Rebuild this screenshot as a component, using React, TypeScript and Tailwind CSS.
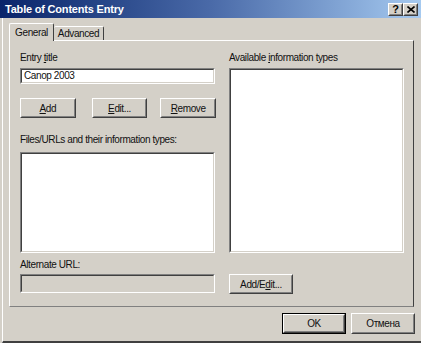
import type { ReactNode } from 'react'

const font = { fontFamily: '"Liberation Sans", Arial, sans-serif' }

// classic raised bevel (buttons, title bar boxes)
const Raised = ({ className = '', children }: { className?: string; children?: ReactNode }) => (
  <div className={`border border-t-white border-l-white border-r-[#404040] border-b-[#404040] ${className}`}>
    <div className="flex h-full w-full items-center justify-center border border-t-[#d4d0c8] border-l-[#d4d0c8] border-r-[#808080] border-b-[#808080]">
      {children}
    </div>
  </div>
)

// classic sunken bevel (inputs, list boxes)
const Sunken = ({ className = '', bg = 'bg-white', children }: { className?: string; bg?: string; children?: ReactNode }) => (
  <div className={`border border-t-[#808080] border-l-[#808080] border-r-white border-b-white ${className}`}>
    <div className={`h-full w-full border border-t-[#404040] border-l-[#404040] border-r-[#d4d0c8] border-b-[#d4d0c8] ${bg}`}>
      {children}
    </div>
  </div>
)

const U = ({ children }: { children: ReactNode }) => <span className="underline underline-offset-1">{children}</span>

const Label = ({ children }: { children: ReactNode }) => (
  <div className="h-[13px] text-[10px] leading-[13px] tracking-[-0.4px] text-[#111]">{children}</div>
)

const txt = 'text-[10px] tracking-[-0.4px] text-[#111]'

export default function App() {
  return (
    <div className="flex h-[343px] w-[421px] flex-col overflow-hidden bg-[#d4d0c8]" style={font}>
      {/* Title bar */}
      <div className="flex h-[18px] shrink-0 items-center bg-gradient-to-r from-[#0a246a] via-[#4a6aa8] to-[#a6caf0] pl-[5px] pr-[3px]">
        <span className="flex-1 text-[11px] font-bold leading-none tracking-[-0.2px] text-white">Table of Contents Entry</span>
        <Raised className="h-[13px] w-[15px] bg-[#d4d0c8]">
          <span className="text-[11px] font-bold leading-none text-black">?</span>
        </Raised>
        <Raised className="h-[13px] w-[15px] bg-[#d4d0c8]">
          <svg width="8" height="7" viewBox="0 0 8 7">
            <path d="M0.5 0.5 L7.5 6.5 M7.5 0.5 L0.5 6.5" stroke="black" strokeWidth="1.6" />
          </svg>
        </Raised>
      </div>

      {/* Body */}
      <div className="ml-[2px] flex flex-1 flex-col border-l border-l-white border-b-2 border-b-[#404040] pl-[6px] pr-[6px]">
        {/* Tabs */}
        <div className="mt-[5px] flex h-[17px] items-end">
          <div className={`relative z-10 -mb-px flex h-[18px] w-[45px] items-center justify-center rounded-t-[2px] border-t border-l border-r border-t-white border-l-white border-r-[#404040] bg-[#d4d0c8] ${txt}`}>
            General
          </div>
          <div className={`flex h-[14px] w-[50px] items-center justify-center rounded-t-[2px] border-t border-r border-t-white border-r-[#404040] ${txt}`}>
            Advanced
          </div>
        </div>

        {/* Tab panel */}
        <div className="flex h-[267px] w-[405px] border border-t-white border-l-white border-r-[#404040] border-b-[#808080] pl-[10px] pt-[10px]">
          <div className="flex w-[196px] flex-col">
            <Label>
              Entry <U>t</U>itle
            </Label>
            <Sunken className="mt-[4px] h-[16px] w-[195px]">
              <div className={`pl-[2px] leading-[12px] ${txt}`}>Canop 2003</div>
            </Sunken>
            <div className="mt-[14px] flex h-[20px]">
              <Raised className="h-[20px] w-[56px]">
                <span className={txt}><U>A</U>dd</span>
              </Raised>
              <Raised className="ml-[16px] h-[20px] w-[56px]">
                <span className={txt}><U>E</U>dit...</span>
              </Raised>
              <Raised className="ml-[13px] h-[20px] w-[56px]">
                <span className={txt}><U>R</U>emove</span>
              </Raised>
            </div>
            <div className="mt-[15px]">
              <Label>Files/URLs and their information types:</Label>
            </div>
            <Sunken className="mt-[6px] h-[101px] w-[195px]" />
            <div className="mt-[5px]">
              <Label>Alternate URL:</Label>
            </div>
            <Sunken className="mt-[3px] h-[19px] w-[195px]" bg="bg-[#d4d0c8]" />
          </div>

          <div className="ml-[13px] flex w-[175px] flex-col">
            <Label>
              Available <U>i</U>nformation types
            </Label>
            <Sunken className="mt-[4px] h-[185px] w-[175px]" />
            <Raised className="mt-[21px] h-[20px] w-[64px]">
              <span className={txt}>Add/E<U>d</U>it...</span>
            </Raised>
          </div>
        </div>

        {/* Dialog buttons */}
        <div className="mt-[6px] flex justify-end">
          <div className="h-[21px] w-[64px] border border-black">
            <Raised className="h-full w-full">
              <span className={txt}>OK</span>
            </Raised>
          </div>
          <Raised className="ml-[5px] h-[21px] w-[64px]">
            <span className={txt}>Отмена</span>
          </Raised>
        </div>
      </div>
    </div>
  )
}
